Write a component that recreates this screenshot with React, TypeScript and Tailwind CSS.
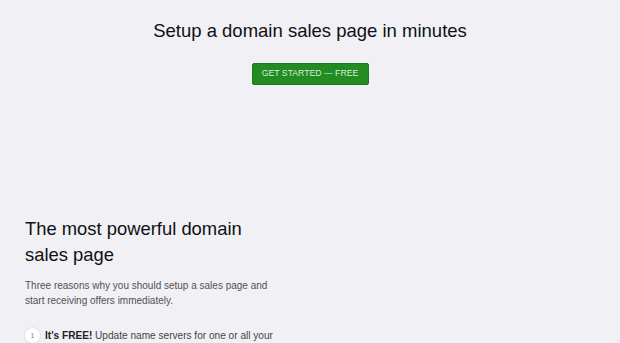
export default function App() {
  return (
    <div className="min-h-[343px] w-full overflow-hidden bg-[#f0f0f5] font-['Liberation_Sans',Arial,sans-serif] text-[#111]">
      <div className="flex flex-col items-center pt-[19px]">
        <h1 className="text-[18.5px] leading-[24px] text-[#111]">Setup a domain sales page in minutes</h1>
        <button className="mt-[20px] flex h-[22px] w-[117px] items-center justify-center rounded-[2px] border border-[#1f7a1f] bg-[#228b22] text-[8.7px] text-[#d8ecd8]">
          GET STARTED — FREE
        </button>
      </div>
      <div className="ml-[25px] mt-[131px] w-[255px]">
        <h2 className="text-[18.4px] leading-[26px] text-[#111]">The most powerful domain sales page</h2>
        <p className="mt-[10px] text-[10px] leading-[15px] text-[#505055]">
          Three reasons why you should setup a sales page and start receiving offers immediately.
        </p>
        <div className="-ml-[1px] mt-[19px] flex items-start gap-[4px] text-[10.1px] leading-[15px] text-[#444]">
          <span className="flex h-[17px] w-[17px] shrink-0 items-center justify-center rounded-full border border-[#e2e2e8] bg-white text-[7px] text-[#888]">1</span>
          <span className="w-[240px] pt-[1px]">
            <b className="text-[#222]">It's FREE!</b> Update name servers for one or all your domains and start receiving offers.
          </span>
        </div>
      </div>
    </div>
  );
}
